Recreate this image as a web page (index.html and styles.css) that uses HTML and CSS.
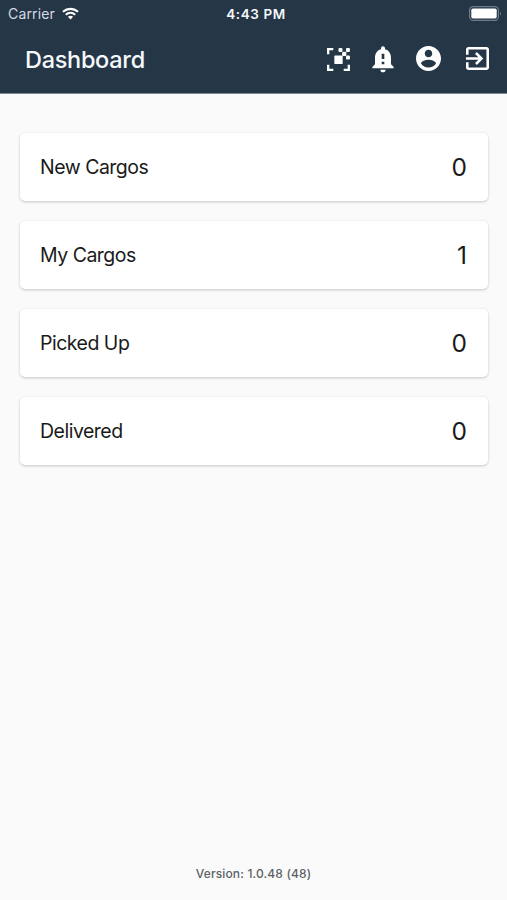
FILE: index.html
```html
<!DOCTYPE html>
<html lang="en">
<head>
<meta charset="utf-8">
<title>Dashboard</title>
<link rel="stylesheet" href="styles.css">
</head>
<body>
<header class="header">
  <div class="status">
    <div class="carrier"><span>Carrier</span>
      <svg class="wifi" viewBox="0 0 18 13"><path d="M1 4.7C5.7.6 12.3.6 17 4.7M4 7.9C7 5.2 11 5.2 14 7.9" fill="none" stroke="#fff" stroke-width="2.2"/><path d="M9 12.8 6.2 10Q9 7.8 11.8 10z" fill="#fff"/></svg>
    </div>
    <time class="clock">4:43 PM</time>
    <svg class="battery" viewBox="0 0 33 15"><rect x=".6" y=".6" width="28.8" height="13.8" rx="3.6" fill="none" stroke="#6f7d8a" stroke-width="1.2"/><rect x="2.3" y="2.600" width="25.4" height="9.800" rx="1.7" fill="#fff"/><path d="M31 5.2q2 2.3 0 4.6z" fill="#6f7d8a"/></svg>
  </div>
  <div class="toolbar">
    <h1 class="title">Dashboard</h1>
    <nav class="actions">
      <svg class="scan" viewBox="0 0 24 24" fill="#fff"><path d="M1 1h6v2.200H3.200V7H1zM1 17h2.200v3.800H7V23H1zM20.800 17H23v6h-6v-2.200h3.800z"/><rect x="8" y="8.200" width="8" height="8" rx=".6"/><rect x="12" y="1" width="3.800" height="3.800" rx="1"/><rect x="19.200" y="1" width="3.800" height="3.800" rx="1"/><rect x="15.500" y="4.600" width="4" height="4" rx=".8"/><rect x="19.200" y="8.200" width="3.800" height="3.800" rx="1"/></svg>
      <svg class="bell" viewBox="4 1.500 16 21" fill="#fff"><path d="M18 16v-5c0-3.070-1.640-5.640-4.500-6.320V4c0-.83-.67-1.500-1.500-1.500s-1.500.67-1.500 1.500v.68C7.630 5.360 6 7.920 6 11v5l-2 2v1h16v-1zM13 16h-2v-2h2zm0-4h-2V8h2zM10 20h4c0 1.100-.9 2-2 2s-2-.9-2-2z"/></svg>
      <svg class="account" viewBox="2 2 20 20" fill="#fff"><path d="M12 2C6.480 2 2 6.480 2 12s4.480 10 10 10 10-4.480 10-10S17.520 2 12 2zm0 3c1.660 0 3 1.340 3 3s-1.340 3-3 3-3-1.340-3-3 1.340-3 3-3zm0 14.200c-2.500 0-4.710-1.280-6-3.220.03-1.990 4-3.080 6-3.080 1.990 0 5.970 1.090 6 3.080-1.290 1.940-3.500 3.220-6 3.220z"/></svg>
      <svg class="exit" viewBox="3 3 18 18" fill="#fff"><path d="M10.090 15.590 11.500 17l5-5-5-5-1.410 1.410L12.670 11H3v2h9.670zM19 3H5c-1.110 0-2 .9-2 2v4h2V5h14v14H5v-4H3v4c0 1.100.89 2 2 2h14c1.100 0 2-.9 2-2V5c0-1.100-.9-2-2-2z"/></svg>
    </nav>
  </div>
</header>
<main class="cards">
  <section class="card"><span>New Cargos</span><b class="count">0</b></section>
  <section class="card"><span>My Cargos</span><b class="count">1</b></section>
  <section class="card"><span>Picked Up</span><b class="count">0</b></section>
  <section class="card"><span>Delivered</span><b class="count">0</b></section>
</main>
<footer class="version">Version: 1.0.48 (48)</footer>
</body>
</html>
```
FILE: styles.css
```css
* { box-sizing: border-box; }
body {
  margin: 0;
  height: 900px;
  display: flex;
  flex-direction: column;
  overflow: hidden;
  background: #fafafa;
  font-family: Inter, "Liberation Sans", sans-serif;
  color: #1a1a1a;
}
.header {
  height: 94px;
  background: #253647;
  border-bottom: 1px solid #7c8690;
  color: #f5f9fc;
}
.status {
  height: 27px;
  padding: 0 5px 0 8px;
  display: grid;
  grid-template-columns: 1fr auto 1fr;
  align-items: center;
}
.carrier {
  display: flex;
  align-items: center;
  gap: 7px;
  font-size: 14px;
  letter-spacing: .15px;
  color: #d5dce2;
}
.wifi { width: 17px; height: 13px; }
.clock {
  padding-left: 2px;
  font-size: 13.500px;
  font-weight: 600;
  letter-spacing: .6px;
}
.battery { width: 33px; height: 15px; justify-self: end; }
.toolbar {
  height: 66px;
  padding: 0 18px 0 25px;
  display: flex;
  align-items: center;
  justify-content: space-between;
}
.title {
  margin: 0;
  padding-bottom: 2px;
  font-size: 23.500px;
  font-weight: 500;
  letter-spacing: -.3px;
}
.actions { display: flex; align-items: center; padding-bottom: 4px; }
.scan { width: 25px; height: 25px; margin: 2px 21px 0 0; }
.bell { width: 22px; height: 28px; margin: 2px 22px 0 0; }
.account { width: 25px; height: 25px; margin-right: 25px; }
.exit { width: 23px; height: 23px; }
.cards {
  flex: 1;
  padding: 39px 19px 0 20px;
  display: flex;
  flex-direction: column;
  gap: 20px;
}
.card {
  height: 68px;
  padding: 0 21px 0 20px;
  display: flex;
  align-items: center;
  justify-content: space-between;
  border-radius: 5px;
  background: #fff;
  box-shadow: 0 1px 3px rgba(0, 0, 0, .22);
  font-size: 19.500px;
  letter-spacing: -.5px;
}
.count { font-size: 24.500px; font-weight: 400; letter-spacing: 0; }
.version {
  height: 54px;
  padding-top: 1px;
  text-align: center;
  line-height: 54px;
  font-size: 12px;
  font-weight: 500;
  letter-spacing: .15px;
  color: #5c6265;
}
```
